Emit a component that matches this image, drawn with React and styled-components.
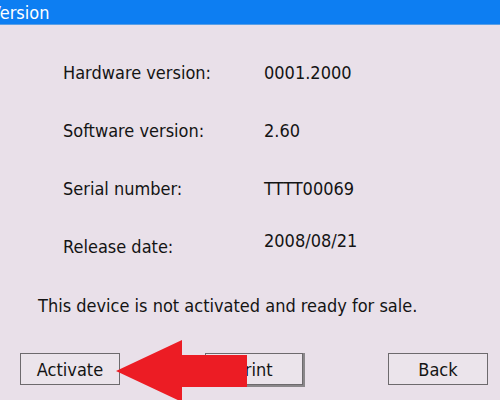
import React from "react";
import styled, { createGlobalStyle } from "styled-components";

const Global = createGlobalStyle`
  html, body { margin: 0; padding: 0; background: #e9e0e9; }
  body { font-family: "DejaVu Sans Condensed", "DejaVu Sans", sans-serif; }
`;

const Screen = styled.div`
  position: relative;
  width: 500px;
  height: 400px;
  overflow: hidden;
  background: #e9e0e9;
  color: #141414;
`;

const TitleBar = styled.div`
  height: 25px;
  background: #0d7ef2;
  border-bottom: 1px solid #5a9fe6;
  box-sizing: border-box;
  display: flex;
  align-items: center;
  overflow: hidden;
`;

const Title = styled.span`
  color: #ffffff;
  font-size: 18px;
  margin-left: -10px;
  white-space: nowrap;
`;

const InfoGrid = styled.div`
  display: grid;
  grid-template-columns: 201px auto;
  grid-auto-rows: 58px;
  margin: 18px 0 0 63px;
  font-size: 18px;
`;

const Label = styled.div`
  display: flex;
  align-items: center;
`;

const Value = styled.div`
  display: flex;
  align-items: center;
  position: relative;
  top: ${(p) => (p.$raise ? -6 : 0)}px;
`;

const Message = styled.div`
  margin: 19px 0 0 38px;
  height: 24px;
  line-height: 24px;
  font-size: 18px;
`;

const ButtonRow = styled.div`
  display: flex;
  justify-content: space-between;
  margin: 35px 12px 0 20px;
`;

const Button = styled.button`
  width: ${(p) => p.$w || 100}px;
  height: 32px;
  box-sizing: border-box;
  background: #ebe4eb;
  border: 1px solid #6d6a6d;
  box-shadow: ${(p) => (p.$default ? "1px 1px 0 1px #8a878a" : "none")};
  font-family: inherit;
  font-size: 18px;
  color: #141414;
  padding: 0;
`;

const Arrow = styled.svg`
  position: absolute;
  left: 0;
  top: 0;
  pointer-events: none;
`;

const rows = [
  ["Hardware version:", "0001.2000"],
  ["Software version:", "2.60"],
  ["Serial number:", "TTTT00069"],
  ["Release date:", "2008/08/21", true],
];

export default function App() {
  return (
    <Screen>
      <Global />
      <TitleBar>
        <Title>Version</Title>
      </TitleBar>
      <InfoGrid>
        {rows.map(([l, v, raise]) => (
          <React.Fragment key={l}>
            <Label>{l}</Label>
            <Value $raise={raise}>{v}</Value>
          </React.Fragment>
        ))}
      </InfoGrid>
      <Message>This device is not activated and ready for sale.</Message>
      <ButtonRow>
        <Button>Activate</Button>
        <Button $w={98} $default>Print</Button>
        <Button>Back</Button>
      </ButtonRow>
      <Arrow width="500" height="400" viewBox="0 0 500 400">
        <polygon
          points="116,371 182,340 182,355 247,355 247,387 182,387 182,402"
          fill="#ec1c24"
        />
      </Arrow>
    </Screen>
  );
}
